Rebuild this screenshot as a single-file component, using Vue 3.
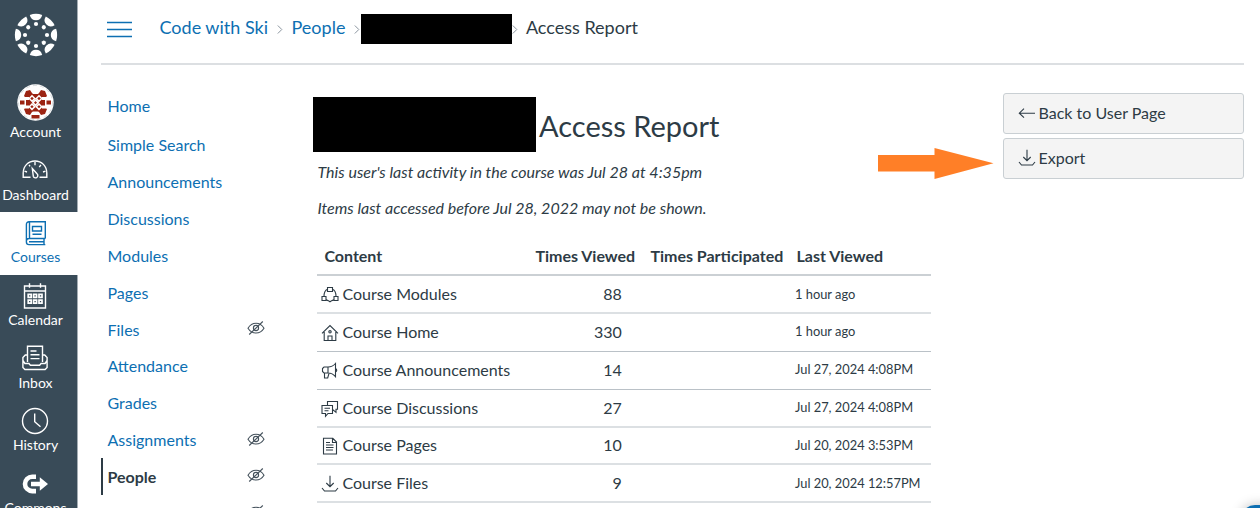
<script setup>
const globalNav = [
  { id: 'account', label: 'Account' },
  { id: 'dashboard', label: 'Dashboard' },
  { id: 'courses', label: 'Courses', active: true },
  { id: 'calendar', label: 'Calendar' },
  { id: 'inbox', label: 'Inbox' },
  { id: 'history', label: 'History' },
  { id: 'commons', label: 'Commons' },
]
const courseNav = [
  { label: 'Home' },
  { label: 'Simple Search' },
  { label: 'Announcements' },
  { label: 'Discussions' },
  { label: 'Modules' },
  { label: 'Pages' },
  { label: 'Files', hidden: true },
  { label: 'Attendance' },
  { label: 'Grades' },
  { label: 'Assignments', hidden: true },
  { label: 'People', hidden: true, active: true },
  { label: 'Collaborations', hidden: true, muted: true },
]
const rows = [
  { icon: 'modules', name: 'Course Modules', views: 88, last: '1 hour ago' },
  { icon: 'home', name: 'Course Home', views: 330, last: '1 hour ago', thin: true },
  { icon: 'announce', name: 'Course Announcements', views: 14, last: 'Jul 27, 2024 4:08PM', thin: true },
  { icon: 'discuss', name: 'Course Discussions', views: 27, last: 'Jul 27, 2024 4:08PM' },
  { icon: 'page', name: 'Course Pages', views: 10, last: 'Jul 20, 2024 3:53PM' },
  { icon: 'download', name: 'Course Files', views: 9, last: 'Jul 20, 2024 12:57PM' },
]
const petals = [0, 45, 90, 135, 180, 225, 270, 315]
</script>

<template>
  <div class="page">
    <nav class="global">
      <div class="logo">
        <svg width="44" height="44" viewBox="-22 -22 44 44" fill="#fff">
          <g v-for="a in petals" :key="a" :transform="`rotate(${a})`">
            <path d="M-6.2 -20.1 Q0 -22.2 6.2 -20.1 Q5 -14.8 0 -14.8 Q-5 -14.8 -6.2 -20.1Z" />
            <circle cx="0" cy="-11" r="2.1" />
          </g>
        </svg>
      </div>
      <a v-for="n in globalNav" :key="n.id" class="gitem" :class="[n.id, { active: n.active }]">
        <span class="gicon">
          <svg v-if="n.id === 'account'" width="37" height="37" viewBox="0 0 37 37">
            <circle cx="18.500" cy="18.500" r="18.200" fill="#fff" />
            <g fill="#9c2413">
              <path d="M9 7l4-1 2 3h7l2-3 4 1 2 5-2 2v9l2 2-2 5-4 1-2-3h-7l-2 3-4-1-2-5 2-2v-9l-2-2z" />
              <path d="M3 16.500h4.500v4H3zM29.500 16.500H34v4h-4.500zM14.500 31h8v3.500h-8z" />
            </g>
            <g fill="#fff">
              <path d="M15.500 5h6v5h-6zM7 13h5v3H7zM25 13h5v3h-5zM7 21.500h5v3H7zM25 21.500h5v3h-5zM15.500 27.500h6v3h-6z" />
            </g>
            <g fill="#9c2413" stroke="#fff" stroke-width="1.500">
              <path d="M15 11.800l2.700 2.700-2.700 2.700-2.700-2.700zM22 11.800l2.700 2.700-2.700 2.700-2.700-2.700zM15 20l2.700 2.700-2.700 2.700-2.700-2.700zM22 20l2.700 2.700-2.700 2.700-2.700-2.700zM18.500 16l2.600 2.600-2.600 2.600-2.600-2.600z" />
            </g>
            <circle cx="18.500" cy="18.500" r="17" fill="none" stroke="#bfc4c8" stroke-width=".6" stroke-dasharray="4 3" />
          </svg>
          <svg v-else-if="n.id === 'dashboard'" width="28" height="22" viewBox="0 0 28 22" class="line">
            <path d="M9.500 18.200H2.200V14C2.200 7 7.300 2 14 2s11.800 5 11.800 12v4.200h-7.300" />
            <path d="M11.300 9.500l4.700 5.300a2.300 2.300 0 1 1-3.700 2.400z" />
            <path d="M14 3v3.300M19.900 5.800l-1.600 2.400M8.100 5.800l.9 1.500M3.500 12.200l2.500 .8M24.500 12.200l-2.500 .8" />
          </svg>
          <svg v-else-if="n.id === 'courses'" width="24" height="28" viewBox="0 0 24 28" class="line">
            <path d="M21.300 19.500V2.800H5A2.600 2.600 0 0 0 2.400 5.400V23a2.600 2.600 0 0 0 2.600 2.600h16.300M5.500 2.800v16.700M2.400 22a2.600 2.600 0 0 1 2.600-2.500h16.300M5 22.800h15v-3M20 22.800v2.800" />
            <path d="M8.500 7.500h9v4.500h-9zM8.500 15.300h9" />
          </svg>
          <svg v-else-if="n.id === 'calendar'" width="26" height="28" viewBox="0 0 26 28" class="line">
            <path d="M2.500 4h21v22h-21zM2.500 9h21M7.500 1.200v4.500M18.500 1.200v4.500" />
            <path d="M6.200 12.400h3v3h-3zM11.600 12.400h3v3h-3zM17 12.400h3v3h-3zM6.200 18.200h3v3h-3zM11.600 18.200h3v3h-3zM17 18.200h3v3h-3z" stroke-width="1.700" />
          </svg>
          <svg v-else-if="n.id === 'inbox'" width="28" height="26" viewBox="0 0 28 26" class="line">
            <path d="M6.500 17V1.300h15V17M9.500 6h6M9.500 9.800h9M9.500 13.600h9" />
            <path d="M6.500 10H4.300L1.900 12.500V22.500l2 2h20.200l2-2V12.500L23.700 10h-2.200M1.900 15.500l2 3h4l1.500 1.800h9.200l1.500-1.800h4l2-3" />
          </svg>
          <svg v-else-if="n.id === 'history'" width="28" height="28" viewBox="0 0 28 28" class="line">
            <circle cx="14" cy="14" r="12.500" /><path d="M13.700 6.500v8.300l5.800 5" />
          </svg>
          <svg v-else width="28" height="22" viewBox="0 0 28 22">
            <path d="M15 3.700H11.200A7.200 7.200 0 0 0 11.200 18.100H15" fill="none" stroke="#fff" stroke-width="4.600" />
            <path d="M10 8.800h8.800V4.300L27 11l-8.200 6.700v-4.500H10z" fill="#fff" />
          </svg>
        </span>
        <span class="glabel">{{ n.label }}</span>
      </a>
    </nav>

    <div class="main">
      <header>
        <svg class="burger" width="25" height="17" viewBox="0 0 25 17"><path d="M0 1.500h25M0 8.500h25M0 15.500h25" /></svg>
        <div class="crumbs">
          <a>Code with Ski</a>
          <svg class="chev" width="6" height="9" viewBox="0 0 6 9"><path d="M.8.500l4 4-4 4" /></svg>
          <a>People</a>
          <svg class="chev ch2" width="6" height="9" viewBox="0 0 6 9"><path d="M.8.500l4 4-4 4" /></svg>
          <span class="redact small"></span>
          <svg class="chev ch3" width="6" height="9" viewBox="0 0 6 9"><path d="M.8.500l4 4-4 4" /></svg>
          <span>Access Report</span>
        </div>
      </header>

      <div class="body">
        <nav class="course">
          <a v-for="c in courseNav" :key="c.label" class="citem" :class="{ active: c.active, muted: c.muted }">
            <span>{{ c.label }}</span>
            <svg v-if="c.hidden" class="eye" width="18" height="14" viewBox="0 0 18 14">
              <path d="M1 7.200Q4 2.300 9 2.300T17 7.200Q14 12 9 12T1 7.200Z" />
              <circle cx="9" cy="7" r="2.600" /><path d="M15.800.5L2.200 13.500" />
            </svg>
          </a>
        </nav>

        <section class="report">
          <div class="title"><span class="redact big"></span><h1>Access Report</h1></div>
          <p class="n1">This user's last activity in the course was Jul 28 at 4:35pm</p>
          <p class="n2">Items last accessed before Jul 28, 2022 may not be shown.</p>
          <div class="table">
            <div class="tr th"><span class="name">Content</span><span>Times Viewed</span><span>Times Participated</span><span class="h4">Last Viewed</span></div>
            <div v-for="r in rows" :key="r.name" class="tr" :class="{ thin: r.thin }">
              <span class="cell">
                <svg width="18" height="18" viewBox="0 0 18 18" class="ico">
                  <template v-if="r.icon === 'modules'">
                    <path d="M6.500 1.500h5v4h-5zM1 10.500h4v4H1zM13 10.500h4v4h-4zM6.500 3.200Q3 4.500 3 10.500M11.500 3.200Q15 4.500 15 10.500M5 13.500q1.500 1.200 2.500 1.300l1.500 1 1.500-1q1-.1 2.500-1.300" />
                  </template>
                  <template v-else-if="r.icon === 'home'">
                    <path d="M1 9.300L9 1.500l8 7.800M3.200 8v8.500h11.600V8M7 16.500v-4.500h4v4.500" /><circle cx="9" cy="7.800" r="1.200" />
                  </template>
                  <template v-else-if="r.icon === 'announce'">
                    <path d="M7 5H3L1.500 6.500v3L3 11h4zM7 5q4.500 0 7.500-3.500v13.200Q11.500 11 7 11M3.500 11v5h3.200L8 11.300M14.500 6.500q2.500 1.500 0 3.500" />
                  </template>
                  <template v-else-if="r.icon === 'discuss'">
                    <path d="M1 5.500h10.500v8H7L4.500 16.300v-2.800H1zM6.500 5.500V1.500h10v7.800h-1.500v3l-3.500-3M3.500 8.200h5.500M3.500 10.800h4" />
                  </template>
                  <template v-else-if="r.icon === 'page'">
                    <path d="M2.500 1.300h9.300L15.500 5v12h-13zM11.500 1.500V5.500h4M5 5.500h4M5 8h7.500M5 10.500h7.500M5 13h7" />
                  </template>
                  <template v-else>
                    <path d="M9 .8v10.500M5.300 8L9 11.700 12.700 8M1 13l2.500 3h11l2.500-3" />
                  </template>
                </svg>
                {{ r.name }}
              </span>
              <span class="views">{{ r.views }}</span>
              <span class="last">{{ r.last }}</span>
            </div>
          </div>
        </section>

        <aside>
          <button><svg width="18" height="18" viewBox="0 0 18 18" class="ico"><path d="M17 9.200H1.500M6 4.700L1.300 9.200 6 13.700" /></svg>Back to User Page</button>
          <button><svg width="18" height="18" viewBox="0 0 18 18" class="ico"><path d="M9 .8v10.500M5.300 8L9 11.700 12.700 8M1 13l2.500 3h11l2.500-3" /></svg>Export</button>
        </aside>
      </div>
    </div>
    <svg class="arrow" width="116" height="32" viewBox="0 0 116 32"><path d="M0 7h56.500V0L115.500 15.300 56.500 31v-7.500H0z" fill="#ff7f27" /></svg>
    <div class="help"></div>
  </div>
</template>

<style>
body { margin: 0; overflow: hidden; }
</style>
<style scoped>
* { box-sizing: border-box; }
.page { position: relative; width: 1260px; height: 508px; overflow: hidden; display: flex; background: #fff; color: #2d3b45; font-family: Lato, "Liberation Sans", sans-serif; font-size: 16px; }
.global { width: 78px; flex: none; background: linear-gradient(to right, #394b58 77px, #a4adb4 77px); color: #fff; overflow: hidden; }
.logo { height: 81.500px; padding: 13px 0 0 13.500px; }
.logo svg { display: block; }
.gitem { display: flex; flex-direction: column; align-items: center; width: 71px; height: 62.700px; }
.gitem.account { height: 67.900px; }
.gicon { height: 42px; display: flex; align-items: center; flex: none; }
.glabel { font-size: 14px; line-height: 18px; margin-top: -5.800px; white-space: nowrap; }
.account .glabel { margin-top: -.6px; }
.gitem.active { width: 78px; height: 63.400px; margin-bottom: -.7px; padding-right: 7px; background: #fff; color: #0d6fb2; }
.gitem.active .gicon svg { margin-right: 0; }
.gitem svg { margin-right: 1px; }
.line { fill: none; stroke: currentColor; stroke-width: 1.400; }
.main { flex: 1; padding-left: 23px; min-width: 0; }
header { height: 65px; width: 1143px; border-bottom: 2px solid #dcdfe2; display: flex; padding-left: 6px; }
.burger { margin-top: 21px; fill: none; stroke: #0d6fb2; stroke-width: 1.300; }
.crumbs { display: flex; align-items: center; height: 54px; margin-left: 27.500px; font-size: 18px; white-space: nowrap; }
.crumbs a, .citem { color: #0d6fb2; }
.chev { fill: none; stroke: #8b959e; margin: 4px 9px 0 8.500px; }
.redact { background: #000; flex: none; }
.chev.ch2 { margin-right: 1px; margin-left: 8.500px; }
.chev.ch3 { margin: 4px 8px 0 0; }
.small { width: 151px; height: 30px; margin-top: 4px; }
.body { display: flex; }
.course { width: 212px; flex: none; padding-top: 22px; }
.citem { display: flex; align-items: center; justify-content: space-between; height: 36.800px; width: 164px; padding-left: 6.500px; font-size: 16px; }
.citem:nth-child(1) { margin-bottom: 2px; }
.citem:nth-child(2) { margin-bottom: 1px; }
.citem.active { color: #2d3b45; font-weight: 700; border-left: 2px solid #2d3b45; padding-left: 4.500px; }
.citem.muted { color: #a9cbe2; }
.eye { fill: none; stroke: #45525c; stroke-width: 1.100; margin-top: -2px; }
.report { width: 618px; flex: none; padding-top: 32px; }
.title { display: flex; height: 55px; }
.big { width: 223px; height: 55px; }
h1 { margin: 9px 0 0 3px; font-size: 29px; font-weight: 400; line-height: 40px; white-space: nowrap; }
p { margin: 0 0 0 4.500px; font-style: italic; line-height: 24px; height: 24px; white-space: nowrap; }
.n1 { margin-top: 8.300px; }
.n2 { margin-top: 12px; }
.table { margin: 17.700px 0 0 4.400px; width: 614px; }
.tr { display: grid; grid-template-columns: 218px 115px 144.600px 1fr; align-items: center; height: 37.800px; padding-bottom: 1.500px; border-bottom: 2px solid #dce0e3; white-space: nowrap; }
.tr.thin { border-bottom: 1px solid #bac1c7; padding-bottom: 2.500px; }
.tr.th { font-weight: 700; border-bottom-color: #cbd0d4; height: 38.500px; }
.name { padding-left: 7px; }
.h4 { padding-left: 1.500px; }
.cell { display: flex; align-items: center; gap: 3px; padding-left: 4px; }
.cell .ico { margin-top: 3px; }
.views { text-align: right; padding-right: 28.500px; }
.last { grid-column: 4; font-size: 12.850px; }
.ico { fill: none; stroke: #2d3b45; stroke-width: 1.100; flex: none; }
aside { padding-top: 28px; margin-left: 72px; width: 241px; }
button { display: flex; align-items: center; gap: 3px; width: 241px; height: 41px; margin: 0 0 4px; padding: 0 0 2.500px 13.500px; background: #f4f4f4; border: 1.500px solid #c9cfd3; border-radius: 3px; font: inherit; color: #2d3b45; }
button .ico { margin-top: 2px; }
.arrow { position: absolute; left: 878px; top: 148px; }
.help { position: absolute; left: 1241px; top: 505px; width: 60px; height: 60px; border-radius: 14px; background: #0d6fb2; box-shadow: 0 0 12px rgba(0, 0, 0, .25); }
</style>
